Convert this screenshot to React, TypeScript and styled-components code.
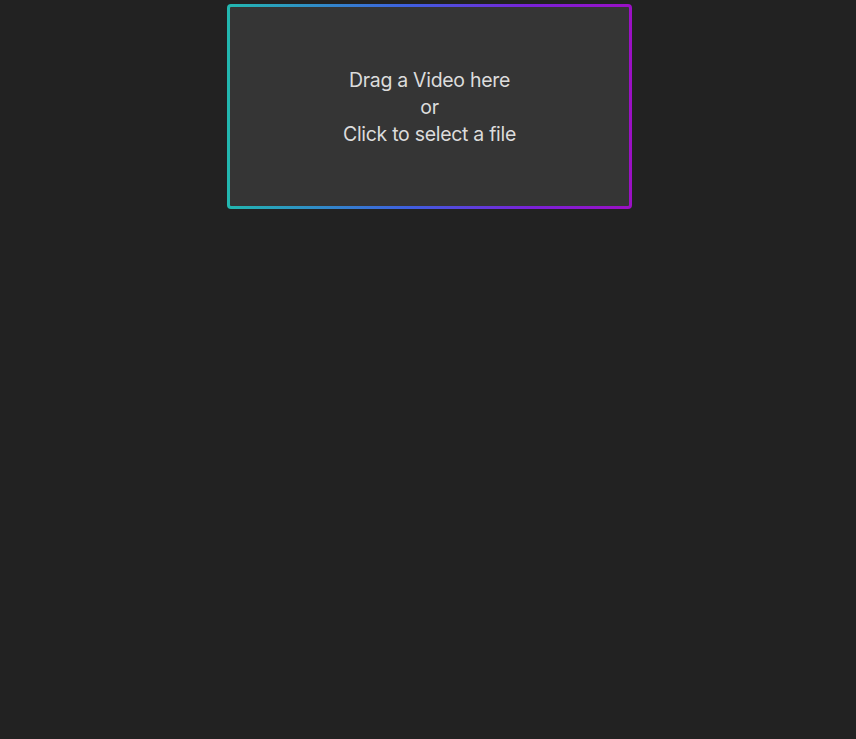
import React from "react";
import styled, { createGlobalStyle } from "styled-components";

const Global = createGlobalStyle`
  html, body { margin: 0; padding: 0; background: #222222; }
  body { font-family: "Inter", "Lato", sans-serif; }
`;

const Page = styled.div`
  min-height: 739px;
  background: #222222;
  display: flex;
  justify-content: center;
  align-items: flex-start;
  padding: 4px 0 0 3px;
  box-sizing: border-box;
`;

const DropZone = styled.div`
  width: 405px;
  height: 205px;
  box-sizing: border-box;
  border: 3px solid transparent;
  border-radius: 4px;
  padding-top: 2px;
  background:
    linear-gradient(#353535, #353535) padding-box,
    linear-gradient(90deg, #22b8b0 0%, #3f5fe0 45%, #7a22d8 75%, #9b10c4 100%) border-box;
  display: flex;
  align-items: center;
  justify-content: center;
  cursor: pointer;
`;

const Label = styled.div`
  color: #dcdcdc;
  font-size: 19.5px;
  line-height: 27px;
  text-align: center;
  letter-spacing: -0.3px;
`;

export default function App() {
  return (
    <>
      <Global />
      <Page>
        <DropZone>
          <Label>
            Drag a Video here
            <br />
            or
            <br />
            Click to select a file
          </Label>
        </DropZone>
      </Page>
    </>
  );
}
